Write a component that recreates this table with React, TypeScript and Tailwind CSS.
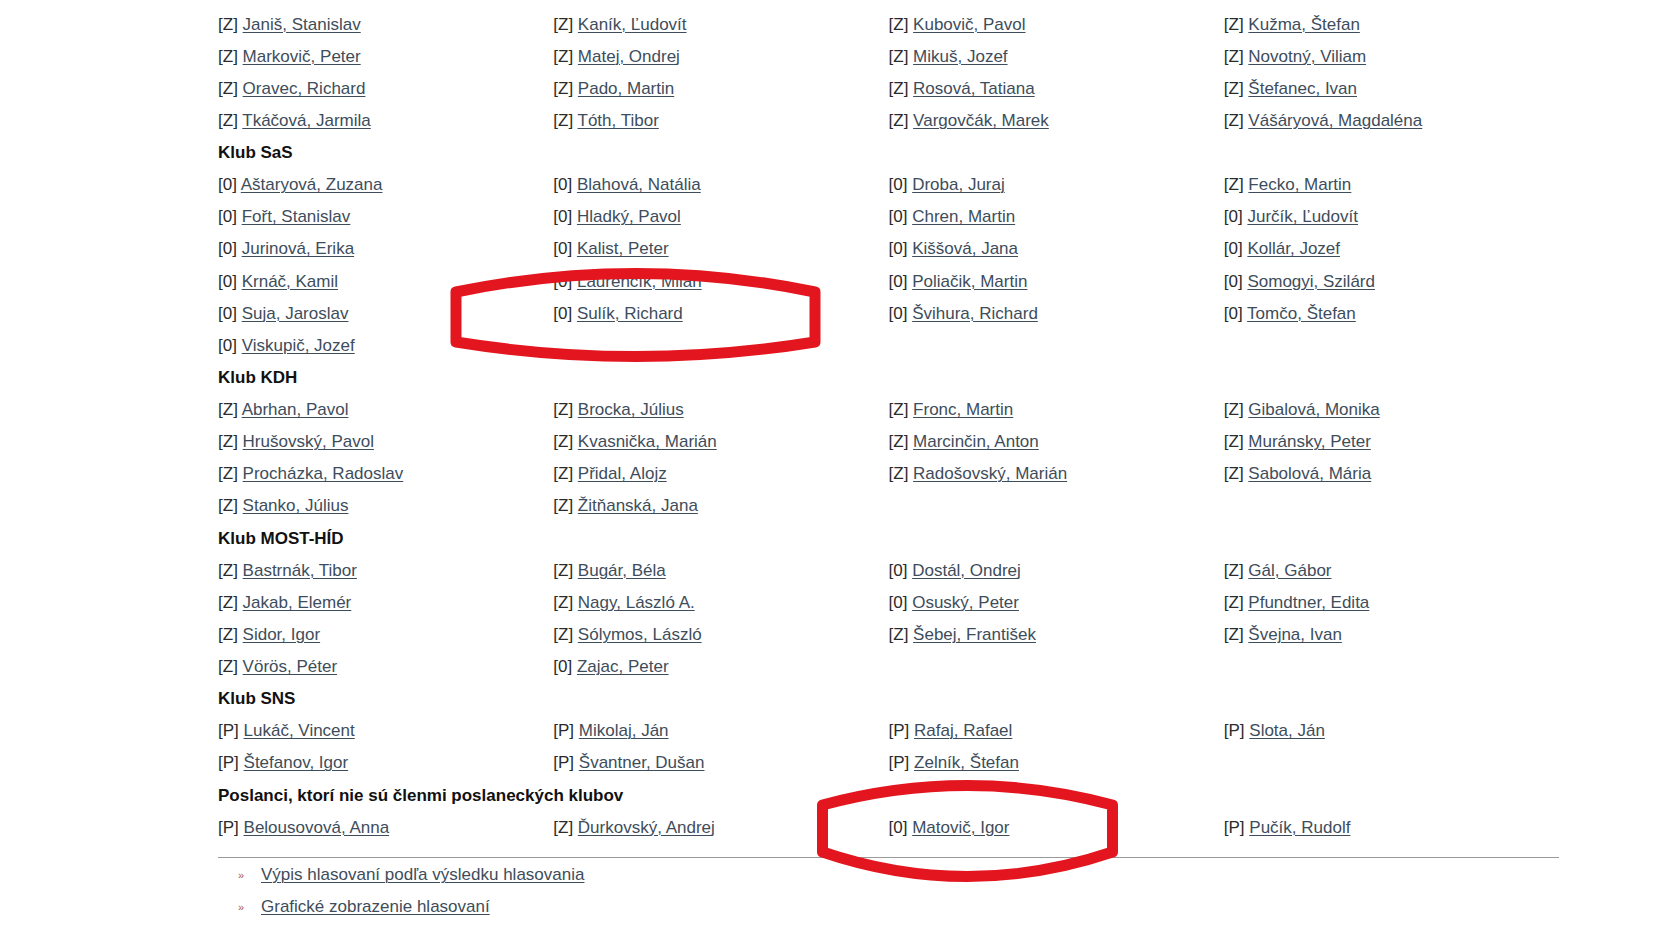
import React from "react";

type Vote = [string, string];

interface Club {
  title?: string;
  members: Vote[];
}

const clubs: Club[] = [
  {
    // SDKÚ-DS, its title sits above the visible part of the page
    members: [
      ["Z", "Frešo, Pavol"],
      ["Z", "Hraško, Jozef"],
      ["Z", "Jurzyca, Eugen"],
      ["Z", "Halák, Lukáš"],
      ["Z", "Janiš, Stanislav"],
      ["Z", "Kaník, Ľudovít"],
      ["Z", "Kubovič, Pavol"],
      ["Z", "Kužma, Štefan"],
      ["Z", "Markovič, Peter"],
      ["Z", "Matej, Ondrej"],
      ["Z", "Mikuš, Jozef"],
      ["Z", "Novotný, Viliam"],
      ["Z", "Oravec, Richard"],
      ["Z", "Pado, Martin"],
      ["Z", "Rosová, Tatiana"],
      ["Z", "Štefanec, Ivan"],
      ["Z", "Tkáčová, Jarmila"],
      ["Z", "Tóth, Tibor"],
      ["Z", "Vargovčák, Marek"],
      ["Z", "Vášáryová, Magdaléna"],
    ],
  },
  {
    title: "Klub SaS",
    members: [
      ["0", "Aštaryová, Zuzana"],
      ["0", "Blahová, Natália"],
      ["0", "Droba, Juraj"],
      ["Z", "Fecko, Martin"],
      ["0", "Fořt, Stanislav"],
      ["0", "Hladký, Pavol"],
      ["0", "Chren, Martin"],
      ["0", "Jurčík, Ľudovít"],
      ["0", "Jurinová, Erika"],
      ["0", "Kalist, Peter"],
      ["0", "Kiššová, Jana"],
      ["0", "Kollár, Jozef"],
      ["0", "Krnáč, Kamil"],
      ["0", "Laurenčík, Milan"],
      ["0", "Poliačik, Martin"],
      ["0", "Somogyi, Szilárd"],
      ["0", "Suja, Jaroslav"],
      ["0", "Sulík, Richard"],
      ["0", "Švihura, Richard"],
      ["0", "Tomčo, Štefan"],
      ["0", "Viskupič, Jozef"],
    ],
  },
  {
    title: "Klub KDH",
    members: [
      ["Z", "Abrhan, Pavol"],
      ["Z", "Brocka, Július"],
      ["Z", "Fronc, Martin"],
      ["Z", "Gibalová, Monika"],
      ["Z", "Hrušovský, Pavol"],
      ["Z", "Kvasnička, Marián"],
      ["Z", "Marcinčin, Anton"],
      ["Z", "Muránsky, Peter"],
      ["Z", "Procházka, Radoslav"],
      ["Z", "Přidal, Alojz"],
      ["Z", "Radošovský, Marián"],
      ["Z", "Sabolová, Mária"],
      ["Z", "Stanko, Július"],
      ["Z", "Žitňanská, Jana"],
    ],
  },
  {
    title: "Klub MOST-HÍD",
    members: [
      ["Z", "Bastrnák, Tibor"],
      ["Z", "Bugár, Béla"],
      ["0", "Dostál, Ondrej"],
      ["Z", "Gál, Gábor"],
      ["Z", "Jakab, Elemér"],
      ["Z", "Nagy, László A."],
      ["0", "Osuský, Peter"],
      ["Z", "Pfundtner, Edita"],
      ["Z", "Sidor, Igor"],
      ["Z", "Sólymos, László"],
      ["Z", "Šebej, František"],
      ["Z", "Švejna, Ivan"],
      ["Z", "Vörös, Péter"],
      ["0", "Zajac, Peter"],
    ],
  },
  {
    title: "Klub SNS",
    members: [
      ["P", "Lukáč, Vincent"],
      ["P", "Mikolaj, Ján"],
      ["P", "Rafaj, Rafael"],
      ["P", "Slota, Ján"],
      ["P", "Štefanov, Igor"],
      ["P", "Švantner, Dušan"],
      ["P", "Zelník, Štefan"],
    ],
  },
  {
    title: "Poslanci, ktorí nie sú členmi poslaneckých klubov",
    members: [
      ["P", "Belousovová, Anna"],
      ["Z", "Ďurkovský, Andrej"],
      ["0", "Matovič, Igor"],
      ["P", "Pučík, Rudolf"],
    ],
  },
];

const links = ["Výpis hlasovaní podľa výsledku hlasovania", "Grafické zobrazenie hlasovaní"];

const VoteItem = ({ vote }: { vote: Vote }) => (
  <div className="h-[32.14px] leading-[32.14px] whitespace-nowrap">
    <span className="text-[#2b2b2b]">[{vote[0]}]</span>{" "}
    <a href="#" className="text-[#3e4d5b] underline underline-offset-2 decoration-1">
      {vote[1]}
    </a>
  </div>
);

export default function App() {
  return (
    <div className="relative w-full h-[945px] overflow-hidden bg-white font-['Liberation_Sans',Arial,sans-serif] text-[17px]">
      <div className="ml-[218px] w-[1341px] mt-[-23.6px]">
        {clubs.map((club, i) => (
          <div key={i}>
            {club.title && (
              <h3 className="h-[32.14px] leading-[32.14px] font-bold text-[#111]">{club.title}</h3>
            )}
            <div className="grid grid-cols-4">
              {club.members.map((m) => (
                <VoteItem key={m[1]} vote={m} />
              ))}
            </div>
          </div>
        ))}

        <div className="mt-[13px] border-t border-[#9a9a9a]">
          <ul className="pt-[1px]">
            {links.map((l) => (
              <li key={l} className="flex items-center h-[32.14px]">
                <span className="w-[43px] pl-[20px] text-[11px] text-[#b4505a]">»</span>
                <a href="#" className="text-[#3e4d5b] underline underline-offset-2 decoration-1">
                  {l}
                </a>
              </li>
            ))}
          </ul>
        </div>
      </div>

      {/* red hand-drawn highlight rings */}
      <svg className="absolute inset-0 pointer-events-none" width="1680" height="945">
        <path
          d="M456,292 Q636,255 815,292 L815,342 Q636,371 456,342 Z"
          fill="none"
          stroke="#e3161f"
          strokeWidth="11"
          strokeLinejoin="round"
        />
        <path
          d="M822.5,805 Q967,766 1112.5,805 L1112.5,852 Q967,901 822.5,852 Z"
          fill="none"
          stroke="#e3161f"
          strokeWidth="11"
          strokeLinejoin="round"
        />
      </svg>
    </div>
  );
}
